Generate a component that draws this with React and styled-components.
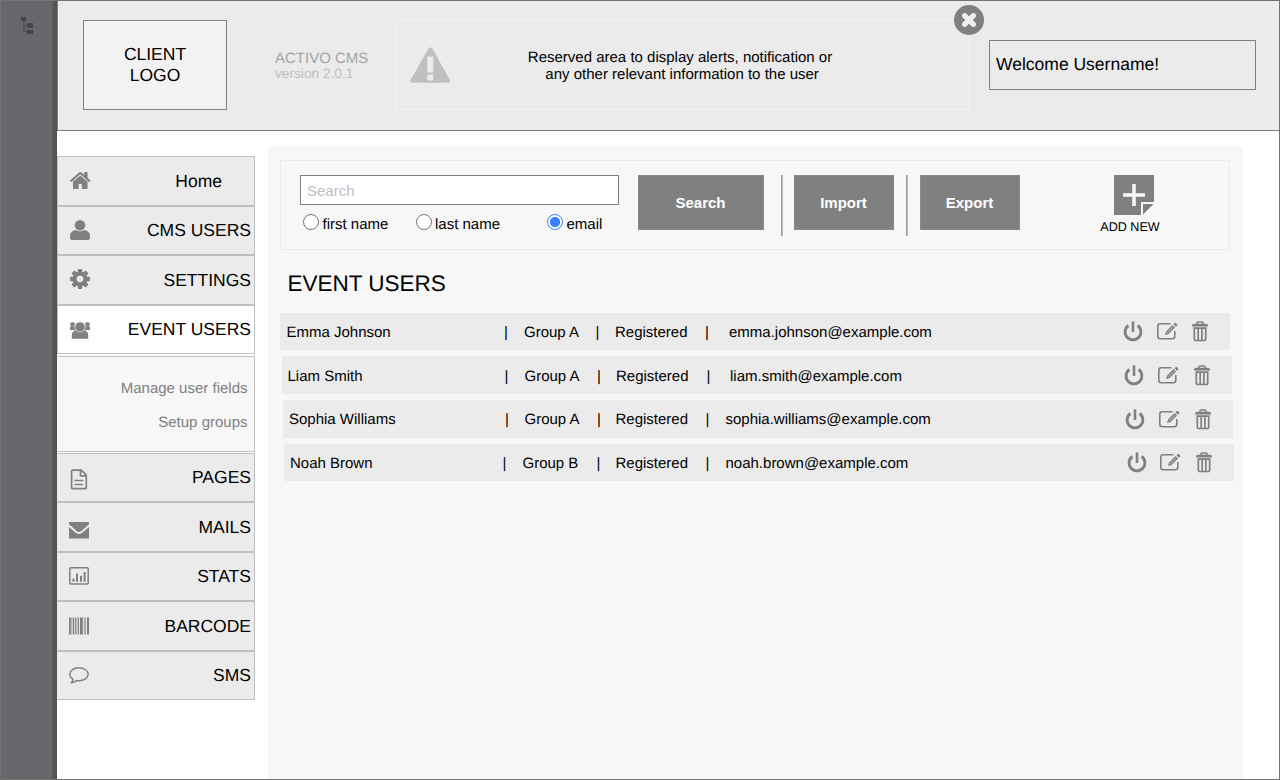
import React from "react";
import styled, { createGlobalStyle } from "styled-components";

const GlobalStyle = createGlobalStyle`
  *, *::before, *::after { box-sizing: border-box; }
  body {
    margin: 0;
    background: #fff;
    color: #000;
    font-family: "Liberation Sans", Arial, sans-serif;
    text-rendering: geometricPrecision;
  }
`;

const Screen = styled.div`
  position: relative;
  display: flex;
  width: 1280px;
  height: 780px;
  overflow: hidden;
  border: solid #737373;
  border-width: 1px 1px 1px 0;
`;

const Rail = styled.aside`
  width: 57px;
  flex: none;
  padding: 15px 0 0 21px;
  background: linear-gradient(to right, #737373 1px, #66676a 1px, #66676a 51px, #57585a 53px, #4f5052 57px);
`;

const Body = styled.div`
  flex: 1;
  display: flex;
  flex-direction: column;
`;

const Header = styled.header`
  display: flex;
  align-items: flex-start;
  height: 130px;
  padding: 19px 23px 0 25px;
  background: #ebebeb;
  border-left: 1px solid #808080;
  border-bottom: 1px solid #808080;
`;

const Logo = styled.div`
  display: flex;
  align-items: center;
  justify-content: center;
  width: 144px;
  height: 90px;
  background: #f2f2f2;
  border: 1px solid #808080;
  font-size: 17.5px;
  line-height: 21px;
  text-align: center;
`;

const Product = styled.div`
  width: 120px;
  margin-left: 48px;
  padding-top: 30px;
  color: #a3a3a3;
  font-size: 15px;
  line-height: 17px;
`;

const Version = styled.div`
  color: #bfbfbf;
  font-size: 13.7px;
  line-height: 14px;
`;

const Alert = styled.section`
  position: relative;
  display: flex;
  align-items: center;
  width: 574px;
  height: 90px;
  padding-left: 14px;
  border: 1px solid #f3f3f3;
  svg { display: block; }
`;

const AlertText = styled.p`
  width: 310px;
  margin: 1px 0 0 74px;
  font-size: 15px;
  line-height: 17px;
  text-align: center;
  white-space: pre;
`;

const CloseButton = styled.button`
  position: absolute;
  top: -16px;
  right: -16px;
  padding: 0;
  border: 0;
  background: none;
  svg { display: block; }
`;

const Welcome = styled.div`
  width: 267px;
  height: 50px;
  margin: 20px 0 0 20px;
  padding: 0 6px;
  border: 1px solid #808080;
  font-size: 17.5px;
  line-height: 46px;
`;

const Content = styled.div`
  flex: 1;
  display: flex;
  align-items: flex-start;
`;

const Sidebar = styled.nav`
  width: 198px;
  margin-top: 25px;
`;

const MenuItem = styled.a`
  display: flex;
  align-items: center;
  justify-content: space-between;
  height: ${(p) => p.$h}px;
  padding: 0 ${(p) => p.$end || 3}px ${(p) => (p.$h === 49 ? 2 : 0)}px 11px;
  background: ${(p) => (p.$active ? "#fff" : "#ebebeb")};
  border: 1px solid #bfbfbf;
  border-left-color: ${(p) => (p.$lower ? "#ebebeb" : "#bfbfbf")};
  font-size: 17.5px;
  line-height: 20px;
  svg { display: block; position: relative; top: ${(p) => p.$dy || 0}px; }
`;

const Submenu = styled.div`
  display: flex;
  flex-direction: column;
  align-items: flex-end;
  gap: 16px;
  height: 96px;
  margin: 2px 0 1px;
  padding: 23px 6.5px 0 0;
  background: #f7f7f7;
  border: 1px solid #bfbfbf;
  border-left-color: #f7f7f7;
  color: #808080;
  font-size: 15px;
  line-height: 18px;
`;

const Panel = styled.main`
  width: 975px;
  height: 633px;
  margin: 15px 0 0 13px;
  padding: 14px 9px 0 12px;
  background: #f7f7f7;
`;

const Toolbar = styled.section`
  display: flex;
  align-items: flex-start;
  width: 950px;
  height: 90px;
  padding: 14px 0 0 19px;
  border: 1px solid #ebebeb;
`;

const SearchGroup = styled.div`
  width: 319px;
  margin-right: 19px;
`;

const SearchInput = styled.input`
  display: block;
  width: 319px;
  height: 30px;
  padding: 1px 6px 0;
  background: #fff;
  border: 1px solid #808080;
  border-radius: 0;
  font: 15px "Liberation Sans", Arial, sans-serif;
  &::placeholder { color: #bfbfbf; opacity: 1; }
`;

const Options = styled.div`
  display: flex;
  padding: 9px 0 0 3px;
`;

const Option = styled.label`
  display: flex;
  width: ${(p) => p.$w}px;
  font-size: 15px;
  line-height: 21px;
  white-space: nowrap;
`;

const Radio = styled.input`
  appearance: none;
  width: 16px;
  height: 16px;
  margin: 0 3.5px 0 0;
  border: 1px solid #767676;
  border-radius: 50%;
  background: #fff;
  &:checked {
    border: 1.5px solid #3b82ff;
    background: radial-gradient(circle, #3b82ff 4.8px, #fff 5.3px);
  }
`;

const Button = styled.button`
  width: ${(p) => p.$w}px;
  height: 55px;
  padding: 0 1px 0 0;
  background: #808080;
  border: 1px solid #8a8a8a;
  color: #fff;
  font: bold 15px "Liberation Sans", Arial, sans-serif;
`;

const Divider = styled.span`
  width: 2px;
  height: 61px;
  margin: 0 ${(p) => p.$after}px 0 ${(p) => p.$before}px;
  background: linear-gradient(to right, #999 1px, #bcbcbc 1px);
`;

const AddNew = styled.div`
  display: flex;
  flex-direction: column;
  align-items: center;
  width: 70px;
  margin-left: 75px;
  font-size: 12.6px;
  line-height: 15px;
  white-space: nowrap;
  svg { display: block; margin: 0 0 5px 8px; }
`;

const Title = styled.h1`
  margin: 21px 0 16px 7.5px;
  font-size: 22.5px;
  font-weight: 400;
  line-height: 26px;
`;

const List = styled.div`
  display: flex;
  flex-direction: column;
  gap: 6px;
`;

const Actions = styled.div`
  display: flex;
  svg { display: block; }
`;

const UserRow = styled.div`
  display: grid;
  grid-template-columns: ${(p) => p.$cols};
  align-items: center;
  width: 950px;
  height: ${(p) => p.$h}px;
  margin-left: ${(p) => p.$shift}px;
  padding: ${(p) => p.$drop}px 0 0 ${(p) => p.$inset}px;
  background: #ebebeb;
  font-size: 15px;
  line-height: 18px;
  white-space: nowrap;
  ${Actions} { margin-top: -${(p) => p.$drop}px; }
`;

const ActionSlot = styled.span`
  width: ${(p) => p.$w}px;
  padding-top: ${(p) => p.$top || 0}px;
`;

const G = "#808080";

const TreeIcon = () => (
  <svg width="13" height="19" viewBox="0 0 13 19" fill="#3f4041" shapeRendering="crispEdges">
    <path d="M0 1h5v4H0zM6 7h6v5H6zM6 14h6v4H6z" opacity=".85" />
    <path d="M2 5h2v11H2zM4 9h2v1H4zM4 15h2v1H4z" opacity=".5" />
  </svg>
);

const WarningIcon = () => (
  <svg width="41" height="36" viewBox="0 0 41 36">
    <path d="M20.500 0.500q1.400 0 2.100 1.300l17.200 31.100q.7 1.100 0 2.100-.6.800-1.700.8H2.300q-1.100 0-1.700-.8-.7-1 0-2.100L18.400 1.800q.7-1.300 2.100-1.300z" fill="#bfbfbf" />
    <path d="M17.300 9.500h6v16h-6zM17.300 27.500h6v6h-6z" fill="#ebebeb" />
  </svg>
);

const CloseIcon = () => (
  <svg width="30" height="30" viewBox="0 0 30 30">
    <circle cx="15" cy="15" r="15" fill={G} />
    <path d="M9.800 9.800l10.400 10.400M20.200 9.800L9.800 20.200" stroke="#f0f0f0" strokeWidth="5.200" />
    <path d="M10.300 10.300l9.400 9.400M19.700 10.300l-9.400 9.400" stroke="#f0f0f0" strokeWidth="4.500" strokeLinecap="round" />
  </svg>
);

const HomeIcon = () => (
  <svg width="22" height="17" viewBox="-62 253 1744 1283" preserveAspectRatio="none" fill={G}>
    <path d="M1408 992v480q0 26-19 45t-45 19h-384v-384h-256v384h-384q-26 0-45-19t-19-45v-480q0-1 .5-3t.5-3l575-474 575 474q1 2 1 6zm223-69l-62 74q-8 9-21 11h-3q-13 0-21-7l-692-577-692 577q-12 8-24 7-13-2-21-11l-62-74q-8-10-7-23.500t11-21.500l719-599q32-26 76-26t76 26l244 204v-195q0-14 9-23t23-9h192q14 0 23 9t9 23v408l219 182q10 8 11 21.500t-7 23.500z" />
  </svg>
);

const UserIcon = () => (
  <svg width="21" height="20" viewBox="0 0 21 20" fill={G}>
    <circle cx="11" cy="5.300" r="5.300" />
    <path d="M6.500 10q4.500 2.600 9 0 5.500 1 5.500 6.500v1.300Q21 20 18.800 20H3.200Q1 20 1 17.800v-1.300Q1 11 6.500 10z" />
  </svg>
);

const GearIcon = () => (
  <svg width="21" height="20" viewBox="0 0 21 20">
    <g fill={G}>
      <circle cx="11" cy="10" r="7.500" />
      {[0, 45, 90, 135].map((a) => (
        <rect key={a} x="8.800" y="0" width="4.400" height="20" rx="1" transform={`rotate(${a} 11 10)`} />
      ))}
    </g>
    <circle cx="11" cy="10" r="3.300" fill="#ebebeb" />
  </svg>
);

const GroupIcon = () => (
  <svg width="22" height="17" viewBox="0 0 22 17">
    <g fill={G}>
      <rect x="1.200" y=".3" width="4.600" height="4" rx="1.600" />
      <path d="M1 8V5.200q0-1 1.500-1h4V8zM21 8V5.200q0-1-1.500-1h-4V8z" />
      <rect x="16.200" y=".3" width="4.600" height="4" rx="1.600" />
      <path d="M7 8.300q4 2.700 8 0 4.200.8 4.200 5v3.400H2.800v-3.400q0-4.200 4.200-5z" />
    </g>
    <circle cx="11" cy="4.900" r="5" fill={G} stroke="#fff" strokeWidth=".5" />
  </svg>
);

const PageIcon = () => (
  <svg width="20" height="21" viewBox="0 0 20 21" fill="none" stroke={G} strokeWidth="1.700">
    <path d="M3.800 1.200h8.500l5 5v12.300q0 1.200-1.200 1.200H3.800q-1.200 0-1.200-1.200V2.400q0-1.200 1.200-1.200zM11.500 1.500v5.400H17" strokeLinejoin="round" />
    <path d="M5.500 11.500h8.700M5.500 15.500h8.700" strokeWidth="1.300" />
  </svg>
);

const MailIcon = () => (
  <svg width="20" height="17" viewBox="0 0 20 17" fill={G}>
    <path d="M0 0h20v2.200L12.300 9q-2.300 2-4.600 0L0 2.200zM0 5l6.800 5.700q3.200 2.400 6.400 0L20 5V16.500H0z" />
  </svg>
);

const StatsIcon = () => (
  <svg width="20" height="18" viewBox="0 0 20 18">
    <rect x=".8" y=".8" width="18.400" height="16.200" rx="1" fill="none" stroke={G} strokeWidth="1.500" />
    <path d="M3.500 11.500h2v3.200h-2zM7 6.500h2v8.200H7zM11 8.700h2v6h-2zM14.600 5h2v9.700h-2z" fill={G} />
  </svg>
);

const BarcodeIcon = () => (
  <svg width="20" height="18" viewBox="0 0 20 18" fill={G}>
    <path d="M0 .5h1.800v17H0zM2.500.5h.8v17h-.8zM4 .5h1.200v17H4zM6 .5h.8v17H6zM7.500.5h.8v17h-.8zM9 .5h1v17H9zM11 .5h2.800v17H11zM14.800.5h.7v17h-.7zM16.300.5h.7v17h-.7zM18 .5h2v17h-2z" />
  </svg>
);

const SpeechIcon = () => (
  <svg width="20" height="17" viewBox="0 0 20 17" fill="none" stroke={G} strokeWidth="1.400">
    <path d="M10 .8c5.200 0 9.200 2.900 9.200 6.500S15.200 13.700 10 13.700q-1.300 0-2.600-.2-2 1.900-4.800 2.300l-.4-.1q1.700-1.300 1.800-3.600C2 11 .8 9.200.8 7.200.8 3.600 4.800.8 10 .8z" />
  </svg>
);

const AddIcon = () => (
  <svg width="40" height="40" viewBox="0 0 40 40">
    <path d="M0 0h40v27H27v13H0z" fill={G} />
    <path d="M29 29h10.500L29 39.500z" fill={G} />
    <path d="M20 9v22M9 20h22" stroke="#f7f7f7" strokeWidth="3.500" />
  </svg>
);

const PowerIcon = () => (
  <svg width="20" height="21" viewBox="0 0 20 21" fill="none" stroke={G}>
    <path d="M5.400 4.500A7.900 7.900 0 1 0 14.600 4.500" strokeWidth="2.800" />
    <path d="M10 .4v10.600" strokeWidth="2.600" />
  </svg>
);

const EditIcon = () => (
  <svg width="21" height="18" viewBox="0 0 21 18" fill="none" stroke={G}>
    <path d="M13.500 1.800H3.300Q.8 1.800.8 4.300v10q0 2.500 2.500 2.500h12q2.500 0 2.500-2.500V9" strokeWidth="1.600" />
    <path d="M8 13.100l1.100-3.600 6.400-6.400 2.500 2.500-6.400 6.400z" fill={G} stroke="none" />
    <path d="M10.300 10.800l5.500-5.500" stroke="#ebebeb" strokeWidth=".6" />
    <path d="M16.400 2.300l1.400-1.300q.5-.5 1 0l1.400 1.400q.5.500 0 1l-1.300 1.400z" fill={G} stroke="none" />
  </svg>
);

const TrashIcon = () => (
  <svg width="17" height="21" viewBox="0 0 17 21" fill="none" stroke={G}>
    <path d="M5 3V1.700q0-.8.800-.8h4.400q.8 0 .8.800V3" strokeWidth="1.500" />
    <path d="M0 5.500V4.600q0-1.800 2-1.800h12q2 0 2 1.800v.9z" fill={G} stroke="none" />
    <path d="M2.300 7.200h11.400v10.600q0 1.700-1.700 1.700H4q-1.700 0-1.700-1.700z" strokeWidth="1.700" />
    <path d="M6.200 7v12.500M9.900 7v12.500" strokeWidth="1.700" />
  </svg>
);

const upperMenu = [
  { label: "Home", Icon: HomeIcon, h: 50, end: 32, dy: -1 },
  { label: "CMS USERS", Icon: UserIcon, h: 49 },
  { label: "SETTINGS", Icon: GearIcon, h: 50, dy: -1 },
  { label: "EVENT USERS", Icon: GroupIcon, h: 49, active: true, dy: 2 },
];

const lowerMenu = [
  { label: "PAGES", Icon: PageIcon, h: 49, dy: 2.5 },
  { label: "MAILS", Icon: MailIcon, h: 50, dy: 3 },
  { label: "STATS", Icon: StatsIcon, h: 49, dy: 0 },
  { label: "BARCODE", Icon: BarcodeIcon, h: 50 },
  { label: "SMS", Icon: SpeechIcon, h: 49, dy: 0.5 },
];

const users = [
  { name: "Emma Johnson", group: "Group A", email: "emma.johnson@example.com", h: 37, shift: 0, inset: 6.5, drop: 2,
    cols: "217.500px 20px 71.500px 19.500px 90px 24px 394px 1fr", power: 34, edit: 35 },
  { name: "Liam Smith", group: "Group A", email: "liam.smith@example.com", h: 38, shift: 2, inset: 5.5, drop: 3,
    cols: "217px 20px 72.500px 19px 90.500px 23.500px 393.500px 1fr", power: 34, edit: 36 },
  { name: "Sophia Williams", group: "Group A", email: "sophia.williams@example.com", h: 38, shift: 3, inset: 6,
    drop: 2, cols: "216px 19.500px 72.500px 18.500px 90px 20px 399px 1fr", power: 34, edit: 36 },
  { name: "Noah Brown", group: "Group B", email: "noah.brown@example.com", h: 37, shift: 4, inset: 6, drop: 2,
    cols: "212.500px 20px 74px 19px 90px 20px 401px 1fr", power: 33, edit: 36 },
];

const Menu = ({ items, lower }) =>
  items.map(({ label, Icon, h, end, active, dy }) => (
    <MenuItem key={label} $h={h} $end={end} $active={active} $dy={dy} $lower={lower}>
      <Icon />
      <span>{label}</span>
    </MenuItem>
  ));

export default function App() {
  return (
    <>
      <GlobalStyle />
      <Screen>
        <Rail><TreeIcon /></Rail>
        <Body>
          <Header>
            <Logo>CLIENT<br />LOGO</Logo>
            <Product>
              ACTIVO CMS
              <Version>version 2.0.1</Version>
            </Product>
            <Alert>
              <WarningIcon />
              <AlertText>{"Reserved area to display alerts, notification or\n any other relevant information to the user"}</AlertText>
              <CloseButton aria-label="Close"><CloseIcon /></CloseButton>
            </Alert>
            <Welcome>Welcome Username!</Welcome>
          </Header>
          <Content>
            <Sidebar>
              <Menu items={upperMenu} />
              <Submenu>
                <span>Manage user fields</span>
                <span>Setup groups</span>
              </Submenu>
              <Menu items={lowerMenu} lower />
            </Sidebar>
            <Panel>
              <Toolbar>
                <SearchGroup>
                  <SearchInput placeholder="Search" />
                  <Options>
                    <Option $w={112.5}><Radio type="radio" name="field" />first name</Option>
                    <Option $w={131.5}><Radio type="radio" name="field" />last name</Option>
                    <Option $w={60}><Radio type="radio" name="field" defaultChecked />email</Option>
                  </Options>
                </SearchGroup>
                <Button $w={126}>Search</Button>
                <Divider $before={17} $after={11} />
                <Button $w={100}>Import</Button>
                <Divider $before={12} $after={12} />
                <Button $w={100}>Export</Button>
                <AddNew>
                  <AddIcon />
                  ADD NEW
                </AddNew>
              </Toolbar>
              <Title>EVENT USERS</Title>
              <List>
                {users.map((u) => (
                  <UserRow key={u.email} $h={u.h} $shift={u.shift} $inset={u.inset} $drop={u.drop} $cols={u.cols}>
                    <span>{u.name}</span>
                    <span>|</span>
                    <span>{u.group}</span>
                    <span>|</span>
                    <span>Registered</span>
                    <span>|</span>
                    <span>{u.email}</span>
                    <Actions>
                      <ActionSlot $w={u.power}><PowerIcon /></ActionSlot>
                      <ActionSlot $w={u.edit} $top={1}><EditIcon /></ActionSlot>
                      <TrashIcon />
                    </Actions>
                  </UserRow>
                ))}
              </List>
            </Panel>
          </Content>
        </Body>
      </Screen>
    </>
  );
}
